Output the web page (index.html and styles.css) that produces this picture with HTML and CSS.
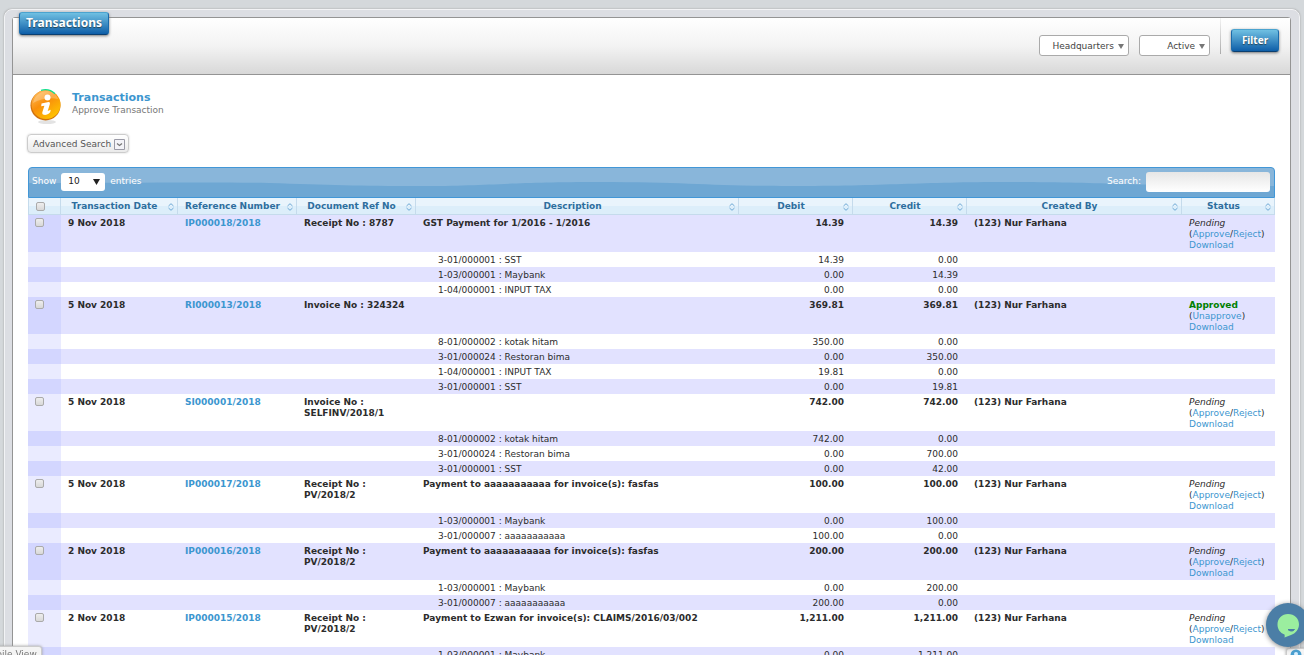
FILE: index.html
```html
<!DOCTYPE html>
<html lang="en">
<head>
  <meta charset="UTF-8" />
  <meta name="viewport" content="width=device-width, initial-scale=1.0" />
  <title>Transactions</title>
  <link rel="stylesheet" href="styles.css">
</head>
<body>
  <svg class="symbols" aria-hidden="true">
    <symbol id="sort" viewBox="0 0 6 8"><path d="M.5 3L3 .7 5.500 3M.5 5L3 7.300 5.500 5" fill="none" stroke="#6da8d5" /></symbol>
    <symbol id="arrow" viewBox="0 0 6 5"><path d="M0 0h6L3 5z" fill="currentColor" /></symbol>
  </svg>

  <div class="frame">
    <main class="panel">
      <header class="toolbar">
        <button type="button" class="btn btn-title">Transactions</button>
        <form class="filters">
          <span class="picker picker-branch">
            <select aria-label="Branch"><option>Headquarters</option></select>
            <svg aria-hidden="true"><use href="#arrow" /></svg>
          </span>
          <span class="picker">
            <select aria-label="State"><option>Active</option></select>
            <svg aria-hidden="true"><use href="#arrow" /></svg>
          </span>
          <span class="divider"></span>
          <button type="button" class="btn btn-filter">Filter</button>
        </form>
      </header>

      <div class="content">
        <div class="intro">
          <svg class="info-icon" viewBox="0 0 32 36" aria-hidden="true">
            <defs>
              <linearGradient id="orange" x1="0" y1="0" x2="0.7" y2="1">
                <stop offset="0" stop-color="#ffc46a" />
                <stop offset="0.5" stop-color="#f98f0c" />
                <stop offset="1" stop-color="#ffc400" />
              </linearGradient>
            </defs>
            <ellipse cx="17" cy="33" rx="9" ry="2" fill="#e3e3e3" />
            <circle cx="15.500" cy="16.500" r="15" fill="#d0720f" />
            <circle cx="16" cy="15.500" r="14.500" fill="url(#orange)" />
            <path d="M3 14C5 5 12 2 17 2c6 0 10 4 11 8-8-2-18 0-25 4z" fill="#fff" opacity="0.25" />
            <path d="M11 1.300c5-1.300 10-.5 14 3.500" fill="none" stroke="#10df8c" stroke-width="1.300" />
            <circle cx="17.500" cy="8.500" r="3" fill="#fff" />
            <path d="M11.500 14.500l7-1.500c1.300 0 1.700.8 1.300 2.200l-2.100 6.800 3-1.300-.5 2.600c-2 2.200-4.500 3-6.500 2.500-1.900-.5-1.600-2.200-1-3.800l1.700-5.300-3.200.6z" fill="#fff" />
          </svg>
          <div>
            <h1>Transactions</h1>
            <p>Approve Transaction</p>
          </div>
        </div>

        <button type="button" class="advanced">
          Advanced Search
          <svg viewBox="0 0 11 11" aria-hidden="true"><path d="M.5.5h10v10H.5z" fill="#f3f3f8" stroke="#9a9aa6" /><path d="M3 4.500l2.500 2 2.500-2" fill="none" stroke="#777" stroke-width="1.300" /></svg>
        </button>

        <div class="table-bar">
          <svg class="wave" viewBox="0 0 1246 29" preserveAspectRatio="none" aria-hidden="true">
            <path d="M0 15C90 15 180 14 240 15C300 17 330 18 390 18C460 18 480 14 570 14C660 14 680 18 760 18C860 18 890 14 980 14C1080 14 1100 18 1246 18V29H0z" />
          </svg>
          <label class="length">Show
            <span class="picker-length">
              <select><option>10</option></select>
              <svg aria-hidden="true"><use href="#arrow" /></svg>
            </span>
            entries</label>
          <label class="search">Search: <input type="search"></label>
        </div>

        <table class="transactions">
          <colgroup>
            <col class="col-check"><col class="col-date"><col class="col-ref"><col class="col-ref"><col>
            <col class="col-amount"><col class="col-amount"><col class="col-user"><col class="col-status">
          </colgroup>
          <thead>
            <tr>
              <th><input type="checkbox" aria-label="Select all"></th>
              <th><div class="sort"><span>Transaction Date</span><svg aria-hidden="true"><use href="#sort" /></svg></div></th>
              <th><div class="sort"><span>Reference Number</span><svg aria-hidden="true"><use href="#sort" /></svg></div></th>
              <th><div class="sort"><span>Document Ref No</span><svg aria-hidden="true"><use href="#sort" /></svg></div></th>
              <th><div class="sort"><span>Description</span><svg aria-hidden="true"><use href="#sort" /></svg></div></th>
              <th><div class="sort"><span>Debit</span><svg aria-hidden="true"><use href="#sort" /></svg></div></th>
              <th><div class="sort"><span>Credit</span><svg aria-hidden="true"><use href="#sort" /></svg></div></th>
              <th><div class="sort"><span>Created By</span><svg aria-hidden="true"><use href="#sort" /></svg></div></th>
              <th><div class="sort"><span>Status</span><svg aria-hidden="true"><use href="#sort" /></svg></div></th>
            </tr>
          </thead>
          <tbody id="rows"></tbody>
        </table>
      </div>
    </main>
  </div>

  <a class="corner-tab corner-left" href="#">Mobile View</a>
  <button type="button" class="corner-tab corner-right" aria-label="Help">
    <svg viewBox="0 0 12 12" aria-hidden="true"><circle cx="6" cy="6" r="5.500" fill="#4a9fd0" /><circle cx="6" cy="5" r="2" fill="#d8efff" /></svg>
  </button>
  <button type="button" class="chat" aria-label="Chat">
    <svg viewBox="0 0 44 44" aria-hidden="true">
      <path d="M22 11c6.500 0 11 4.500 11 10.500 0 5-3.500 9-8 10.500l-6.500 2.500c.3-1 .3-2 0-3C14 30 11.500 26 11.500 21.500 11.500 15.500 16 11 22 11z" fill="#9bee9f" />
      <path d="M22 26.500c2 2 5 2 6.500 0z" fill="#4b7ea6" stroke="#4b7ea6" />
    </svg>
  </button>

  <script src="script.js"></script>
</body>
</html>
```
FILE: styles.css
```css
* {
  box-sizing: border-box;
}
body {
  margin: 0;
  height: 100vh;
  padding: 9px 4px 0;
  overflow: hidden;
  background: #d4d8db;
  font: 9px/11px "DejaVu Sans", Verdana, sans-serif;
  color: #2c2c2c;
}
button, input, select {
  font: inherit;
  margin: 0;
}
a {
  color: #3c96cf;
  text-decoration: none;
}
.symbols {
  position: absolute;
  width: 0;
  height: 0;
}

/* outer frame and white panel */
.frame {
  min-height: 100%;
  padding: 7px 8px 0 7px;
  border: 1px solid #f2f3f5;
  border-radius: 8px;
  background: #dcdee3;
  box-shadow: 0 0 2px #999;
}
.panel {
  min-height: 100vh;
  border: 1px solid #949494;
  border-radius: 3px;
  background: #fff;
}
.toolbar {
  display: flex;
  justify-content: space-between;
  align-items: flex-start;
  height: 57px;
  padding: 0 11px 0 6px;
  border-bottom: 1px solid #949494;
  background: linear-gradient(#fff, #f3f3f3 50%, #d8d8d8);
}
.btn {
  border: 1px solid #1b6bab;
  border-top-color: #4ba3cf;
  border-bottom-color: #0b3f70;
  border-radius: 3px;
  background: linear-gradient(#70c0e2, #0e5ea8);
  box-shadow: 0 1px 3px #777;
  color: #fff;
  font-family: "Noto Sans", sans-serif;
  font-weight: bold;
  text-shadow: 0 1px 1px #245;
}
.btn-title {
  height: 23px;
  margin-top: -6px;
  padding: 0 6px 2px;
  font-size: 12px;
}
.btn-filter {
  width: 48px;
  height: 23px;
  margin-top: 11px;
  padding: 0;
  font-size: 10px;
}
.filters {
  display: flex;
  align-items: flex-start;
  gap: 10px;
}
.picker {
  position: relative;
  width: 71px;
  margin-top: 17px;
}
.picker-branch {
  width: 90px;
}
.picker select {
  appearance: none;
  display: block;
  width: 100%;
  height: 21px;
  padding: 2px 14px 0 0;
  border: 1px solid #aaa;
  border-radius: 3px;
  background: #fff;
  color: #444;
  text-align: right;
  text-align-last: right;
}
.picker svg {
  position: absolute;
  top: 9px;
  right: 5px;
  width: 6px;
  height: 5px;
  color: #777;
  pointer-events: none;
}
.divider {
  width: 1px;
  height: 36px;
  background: linear-gradient(#f4f4f4, #aaa);
}

/* page heading */
.content {
  padding: 14px 15px 0;
}
.intro {
  display: flex;
  gap: 10px;
}
.info-icon {
  width: 32px;
  height: 36px;
  margin-left: 2px;
}
.intro h1 {
  margin: 3px 0 0;
  color: #3c96cf;
  font-size: 11px;
  line-height: 12px;
}
.intro p {
  margin: 0;
  line-height: 13px;
  color: #777;
}
.advanced {
  display: flex;
  align-items: center;
  gap: 3px;
  height: 19px;
  margin: 9px 0 14px -1px;
  padding: 1px 3px 0 5px;
  border: 1px solid #ccc;
  border-radius: 4px;
  background: linear-gradient(#fff, #eaeaea);
  box-shadow: 0 0 2px #ccc;
  color: #555;
}
.advanced svg {
  width: 11px;
  height: 11px;
}

/* bar above the table */
.table-bar {
  position: relative;
  display: flex;
  justify-content: space-between;
  align-items: center;
  height: 31px;
  padding: 0 4px 2px 3px;
  border: 1px solid #4297d7;
  border-radius: 4px 4px 0 0;
  background: #89b6da;
  color: #fff;
}
.wave {
  position: absolute;
  inset: 0;
  width: 100%;
  height: 100%;
  fill: #6ea7d3;
}
.table-bar label {
  position: relative;
  display: flex;
  align-items: center;
  gap: 5px;
}
.picker-length {
  position: relative;
}
.picker-length select {
  appearance: none;
  display: block;
  width: 44px;
  height: 18px;
  padding: 0 7px;
  border: 0;
  border-radius: 3px;
  background: #fff;
  color: #222;
}
.picker-length svg {
  position: absolute;
  top: 6px;
  right: 5px;
  width: 7px;
  height: 6px;
  color: #222;
  pointer-events: none;
}
.search input {
  width: 124px;
  height: 20px;
  border: 0;
  border-radius: 3px;
  background: linear-gradient(#e6e6e6, #fff);
}

/* transactions table */
.transactions {
  width: 100%;
  table-layout: fixed;
  border-collapse: separate;
  border-spacing: 0;
}
.col-check { width: 33px; }
.col-date { width: 117px; }
.col-ref { width: 119px; }
.col-amount { width: 114px; }
.col-user { width: 215px; }
.col-status { width: 93px; }
th {
  height: 17px;
  padding: 1px 0 0;
  border-right: 1px solid #c5dbec;
  border-bottom: 1px solid #c5dbec;
  background: linear-gradient(#e9f4fc 50%, #dceefa 50%);
  color: #2e6e9e;
}
th:first-child {
  border-left: 1px solid #c5dbec;
}
.sort {
  display: flex;
  align-items: center;
  padding-right: 3px;
}
.sort span {
  flex: 1;
}
.sort svg {
  width: 6px;
  height: 8px;
}
td {
  height: 15px;
  padding: 3px 7px 1px;
  vertical-align: top;
}
tbody tr:nth-child(odd) {
  background: #e2e2ff;
}
tbody tr:nth-child(odd) td:first-child {
  background: #d3d6ff;
}
tbody tr:nth-child(even) td:first-child {
  background: #eaebff;
}
.entry {
  font-weight: bold;
}
.entry td {
  height: 37px;
}
.entry .status {
  font-weight: normal;
  white-space: nowrap;
}
td.amount {
  padding-right: 9px;
  text-align: right;
}
td.account {
  padding-left: 22px;
}
.approved {
  color: #008000;
}
input[type="checkbox"] {
  appearance: none;
  display: block;
  width: 9px;
  height: 9px;
  border: 1px solid #aaa;
  border-radius: 2px;
  background: linear-gradient(#eee, #d8d8d8);
}
th input[type="checkbox"] {
  margin-left: 7px;
}

/* floating items */
.corner-tab {
  position: fixed;
  bottom: -8px;
  border: 1px solid #ccc;
  border-radius: 3px;
  background: #f4f4f4;
  box-shadow: 0 0 3px #999;
  color: #777;
}
.corner-left {
  left: -22px;
  padding: 2px 4px;
}
.corner-right {
  right: -2px;
  width: 20px;
  height: 15px;
  padding: 0;
}
.corner-right svg {
  width: 12px;
  height: 12px;
}
.chat {
  position: fixed;
  right: -6px;
  bottom: 8px;
  width: 44px;
  height: 44px;
  padding: 0;
  border: 0;
  border-radius: 50%;
  background: #4b7ea6;
  box-shadow: 0 1px 5px #888;
}
```
FILE: script.js
```js
const entries = [
  { date: "9 Nov 2018", ref: "IP000018/2018", doc: "Receipt No : 8787", text: "GST Payment for 1/2016 - 1/2016", total: "14.39",
    lines: [["3-01/000001 : SST", "14.39", "0.00"], ["1-03/000001 : Maybank", "0.00", "14.39"], ["1-04/000001 : INPUT TAX", "0.00", "0.00"]] },
  { date: "5 Nov 2018", ref: "RI000013/2018", doc: "Invoice No : 324324", text: "", total: "369.81", approved: true,
    lines: [["8-01/000002 : kotak hitam", "350.00", "0.00"], ["3-01/000024 : Restoran bima", "0.00", "350.00"], ["1-04/000001 : INPUT TAX", "19.81", "0.00"], ["3-01/000001 : SST", "0.00", "19.81"]] },
  { date: "5 Nov 2018", ref: "SI000001/2018", doc: "Invoice No :<br>SELFINV/2018/1", text: "", total: "742.00",
    lines: [["8-01/000002 : kotak hitam", "742.00", "0.00"], ["3-01/000024 : Restoran bima", "0.00", "700.00"], ["3-01/000001 : SST", "0.00", "42.00"]] },
  { date: "5 Nov 2018", ref: "IP000017/2018", doc: "Receipt No :<br>PV/2018/2", text: "Payment to aaaaaaaaaaa for invoice(s): fasfas", total: "100.00",
    lines: [["1-03/000001 : Maybank", "0.00", "100.00"], ["3-01/000007 : aaaaaaaaaaa", "100.00", "0.00"]] },
  { date: "2 Nov 2018", ref: "IP000016/2018", doc: "Receipt No :<br>PV/2018/2", text: "Payment to aaaaaaaaaaa for invoice(s): fasfas", total: "200.00",
    lines: [["1-03/000001 : Maybank", "0.00", "200.00"], ["3-01/000007 : aaaaaaaaaaa", "200.00", "0.00"]] },
  { date: "2 Nov 2018", ref: "IP000015/2018", doc: "Receipt No :<br>PV/2018/2", text: "Payment to Ezwan for invoice(s): CLAIMS/2016/03/002", total: "1,211.00",
    lines: [["1-03/000001 : Maybank", "0.00", "1,211.00"]] }
];

function entryRow(e) {
  const status = e.approved
    ? `<b class="approved">Approved</b><br>(<a href="#">Unapprove</a>)`
    : `<i>Pending</i><br>(<a href="#">Approve</a>/<a href="#">Reject</a>)`;
  return `<tr class="entry">
    <td><input type="checkbox" aria-label="Select ${e.ref}"></td>
    <td>${e.date}</td><td><a href="#">${e.ref}</a></td><td>${e.doc}</td><td>${e.text}</td>
    <td class="amount">${e.total}</td><td class="amount">${e.total}</td>
    <td>(123) Nur Farhana</td>
    <td class="status">${status}<br><a href="#">Download</a></td></tr>`;
}

function lineRow([account, debit, credit]) {
  return `<tr><td></td><td></td><td></td><td></td><td class="account">${account}</td>
    <td class="amount">${debit}</td><td class="amount">${credit}</td><td></td><td></td></tr>`;
}

document.getElementById("rows").innerHTML = entries.map(e => entryRow(e) + e.lines.map(lineRow).join("")).join("");
```
